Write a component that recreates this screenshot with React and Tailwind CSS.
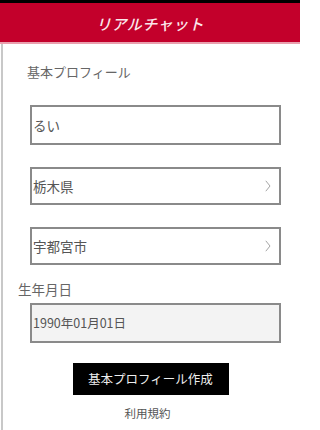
const font = { fontFamily: '"Noto Sans CJK JP", "Noto Sans", sans-serif' };

function Chevron() {
  return (
    <svg width="6" height="12" viewBox="0 0 6 12" fill="none" className="shrink-0">
      <path d="M0.8 0.8 L5 6 L0.8 11.2" stroke="#9a9a9a" strokeWidth="0.9" />
    </svg>
  );
}

function Field({ children, arrow, gray, className = '' }) {
  return (
    <div
      className={`ml-[27px] w-[251px] flex items-center justify-between border-2 border-[#8a8a8a] pl-[1px] pr-[8px] text-[#555] ${
        gray ? 'bg-[#f3f3f3]' : 'bg-white'
      } ${className}`}
    >
      <span>{children}</span>
      {arrow && <Chevron />}
    </div>
  );
}

export default function App() {
  return (
    <div className="w-[300px] h-[430px] bg-white overflow-hidden flex flex-col" style={font}>
      <div className="border-t-[3px] border-black h-[42px] bg-[#c3002b] flex items-center justify-center shrink-0">
        <span className="text-[15px] italic font-medium text-[#fbe6ea] tracking-[0.5px] mt-[3px]">リアルチャット</span>
      </div>
      <div className="h-[2px] bg-[#e9a0ae] shrink-0" />

      <div className="flex-1 border-l-2 border-[#c8c8c8] ml-[1px]">
        <div className="pl-[24px] pt-[19px] text-[13px] text-[#666] leading-[18px]">基本プロフィール</div>

        <Field className="mt-[24px] h-[40px] text-[13.5px]">るい</Field>
        <Field arrow className="mt-[22px] h-[38px] text-[13.5px]">栃木県</Field>
        <Field arrow className="mt-[22px] h-[38px] text-[13.5px]">宇都宮市</Field>

        <div className="pl-[15px] mt-[15px] text-[13.5px] text-[#666] leading-[18px]">生年月日</div>
        <Field gray className="mt-[5px] h-[40px] text-[12.5px]">1990年01月01日</Field>

        <div className="flex justify-center mt-[20px]">
          <button
            type="button"
            className="w-[156px] h-[32px] bg-black text-[#eee] text-[12.5px] ml-[-2px]"
          >
            基本プロフィール作成
          </button>
        </div>
        <div className="text-center text-[11.5px] text-[#555] mt-[10px] -ml-[8px]">利用規約</div>
      </div>
    </div>
  );
}
